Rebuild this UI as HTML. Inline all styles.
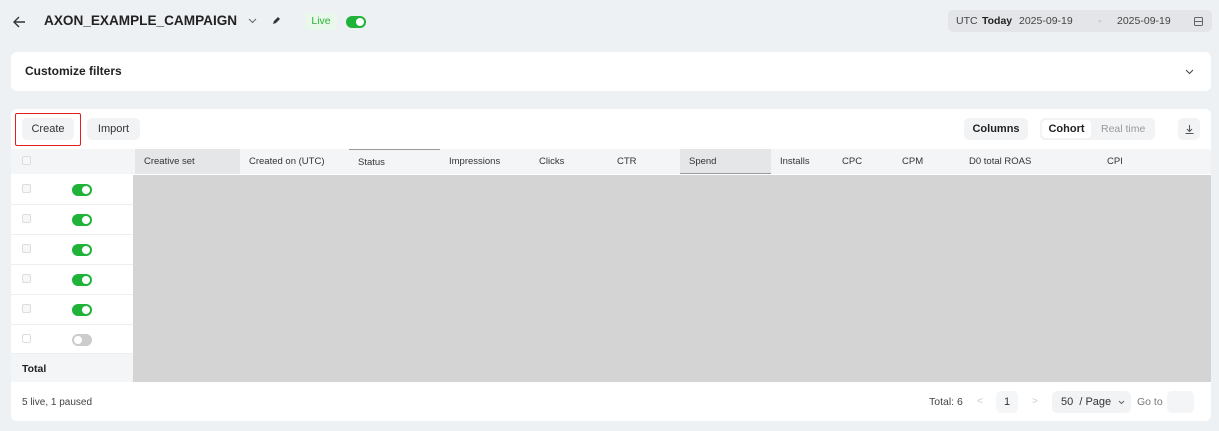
<!DOCTYPE html>
<html><head><style>
*{box-sizing:border-box;margin:0;padding:0}
body{width:1219px;height:431px;background:#eef1f4;font-family:"Liberation Sans",sans-serif;color:#222;position:relative;overflow:hidden;font-size:11px}
.a{position:absolute}
.card{position:absolute;left:11px;width:1200px;background:#fff;border-radius:6px}
.btn{position:absolute;background:#f2f3f5;border-radius:5px;font-size:11px;display:flex;align-items:center;justify-content:center;color:#333}
.th{position:absolute;top:149px;height:25px;font-size:9.5px;color:#333;padding-left:9px;line-height:25px;background:#f4f5f7}
.tg{position:absolute;width:20px;height:12px;border-radius:6px;background:#1fb33a}
.tg::after{content:"";position:absolute;right:2px;top:2px;width:8px;height:8px;border-radius:50%;background:#fff}
.tg.off{background:#ccc}.tg.off::after{right:auto;left:2px}
.cb{position:absolute;left:22px;width:9px;height:9px;border:1px solid #ddd;border-radius:2px;background:#f7f7f7}
.row{position:absolute;left:11px;width:122px;height:30px;border-bottom:1px solid #eee;background:#fff}
</style></head><body>
<svg class="a" style="left:12px;top:15px" width="14" height="14" viewBox="0 0 14 14"><path d="M13 7H2M7 2L2 7l5 5" stroke="#333" stroke-width="1.4" fill="none"/></svg>
<div class="a" style="left:44px;top:13px;font-size:13.6px;font-weight:bold;color:#222">AXON_EXAMPLE_CAMPAIGN</div>
<svg class="a" style="left:248px;top:18px" width="9" height="6"><path d="M1 1l3.5 3.5L8 1" stroke="#666" fill="none"/></svg>
<svg class="a" style="left:272px;top:16px" width="9" height="9"><path d="M1 8l1-3 4-4 2 2-4 4z" fill="#333"/></svg>
<div class="a" style="left:305px;top:13px;width:32px;height:17px;background:#e9f8ea;border-radius:4px;color:#2bb33a;font-size:10.5px;text-align:center;line-height:17px">Live</div>
<div class="tg" style="left:346px;top:16px"></div>
<div class="a" style="left:948px;top:10px;width:264px;height:22px;background:#e3e5e8;border-radius:5px;font-size:10.5px;line-height:22px;color:#444">
<span class="a" style="left:8px">UTC</span><span class="a" style="left:34px;font-weight:bold;color:#222">Today</span><span class="a" style="left:71px">2025-09-19</span><span class="a" style="left:150px;color:#aaa">-</span><span class="a" style="left:169px">2025-09-19</span>
<svg class="a" style="left:246px;top:7px" width="9" height="9"><rect x=".5" y=".5" width="8" height="8" rx="1" stroke="#666" fill="none"/><path d="M.5 4.5h8" stroke="#666"/></svg></div>
<div class="card" style="top:52px;height:39px"><div class="a" style="left:14px;top:12px;font-size:12px;font-weight:bold;color:#222">Customize filters</div>
<svg class="a" style="left:1174px;top:17px" width="9" height="6"><path d="M1 1l3.5 3.5L8 1" stroke="#444" fill="none"/></svg></div>
<div class="card" style="top:109px;height:312px"></div>
<div class="btn" style="left:22px;top:118px;width:52px;height:22px">Create</div>
<div class="a" style="left:15px;top:113px;width:66px;height:33px;border:1.5px solid #e02020;border-radius:2px"></div>
<div class="btn" style="left:87px;top:118px;width:53px;height:22px">Import</div>
<div class="btn" style="left:964px;top:118px;width:64px;height:22px;font-weight:bold;color:#222">Columns</div>
<div class="btn" style="left:1040px;top:118px;width:115px;height:22px"></div>
<div class="a" style="left:1042px;top:120px;width:49px;height:18px;background:#fff;border-radius:4px;font-size:11px;font-weight:bold;text-align:center;line-height:18px">Cohort</div>
<div class="a" style="left:1101px;top:123px;font-size:10.5px;color:#999">Real time</div>
<div class="btn" style="left:1178px;top:118px;width:22px;height:22px"><svg width="9" height="9"><path d="M4.5 0v6M2 4l2.5 2.5L7 4M.5 8.5h8" stroke="#555" fill="none"/></svg></div>
<div class="th" style="left:11px;width:124px"></div>
<div class="cb" style="top:156px"></div>
<div class="th" style="left:135px;width:105px;background:#e5e6e8">Creative set</div>
<div class="th" style="left:240px;width:109px">Created on (UTC)</div>
<div class="th" style="left:349px;width:91px;border-top:1px solid #999;line-height:26px">Status</div>
<div class="th" style="left:440px;width:90px">Impressions</div>
<div class="th" style="left:530px;width:78px">Clicks</div>
<div class="th" style="left:608px;width:72px">CTR</div>
<div class="th" style="left:680px;width:91px;background:#e5e6e8;border-bottom:1px solid #999">Spend</div>
<div class="th" style="left:771px;width:62px">Installs</div>
<div class="th" style="left:833px;width:60px">CPC</div>
<div class="th" style="left:893px;width:67px">CPM</div>
<div class="th" style="left:960px;width:140px">D0 total ROAS</div>
<div class="th" style="left:1100px;width:111px;padding-left:7px">CPI</div>
<div class="a" style="left:133px;top:175px;width:1078px;height:207px;background:#d4d4d4"></div>
<div class="row" style="top:175px"></div><div class="cb" style="top:184px"></div><div class="tg" style="left:72px;top:184px"></div>
<div class="row" style="top:205px"></div><div class="cb" style="top:214px"></div><div class="tg" style="left:72px;top:214px"></div>
<div class="row" style="top:235px"></div><div class="cb" style="top:244px"></div><div class="tg" style="left:72px;top:244px"></div>
<div class="row" style="top:265px"></div><div class="cb" style="top:274px"></div><div class="tg" style="left:72px;top:274px"></div>
<div class="row" style="top:295px"></div><div class="cb" style="top:304px"></div><div class="tg" style="left:72px;top:304px"></div>
<div class="row" style="top:325px;height:29px"></div><div class="cb" style="top:334px;background:#fff"></div><div class="tg off" style="left:72px;top:334px"></div>
<div class="a" style="left:11px;top:354px;width:122px;height:28px;background:#f4f5f7;font-size:10.5px;font-weight:bold;padding:9px 0 0 11px">Total</div>
<div class="a" style="left:22px;top:397px;font-size:10px;color:#444">5 live, 1 paused</div>
<div class="a" style="left:929px;top:396px;font-size:10.5px;color:#444">Total: 6</div>
<div class="a" style="left:977px;top:396px;font-size:10px;color:#ccc">&lt;</div>
<div class="btn" style="left:996px;top:391px;width:22px;height:22px;background:#f4f6f8">1</div>
<div class="a" style="left:1032px;top:396px;font-size:10px;color:#ccc">&gt;</div>
<div class="btn" style="left:1052px;top:391px;width:79px;height:22px;justify-content:flex-start;padding-left:9px;font-size:11px">50 &nbsp;/ Page <svg style="margin-left:7px" width="7" height="5"><path d="M1 1l2.5 2.5L6 1" stroke="#666" fill="none"/></svg></div>
<div class="a" style="left:1137px;top:396px;font-size:10.5px;color:#777">Go to</div>
<div class="btn" style="left:1167px;top:391px;width:27px;height:22px;background:#f4f5f6"></div>
</body></html>
